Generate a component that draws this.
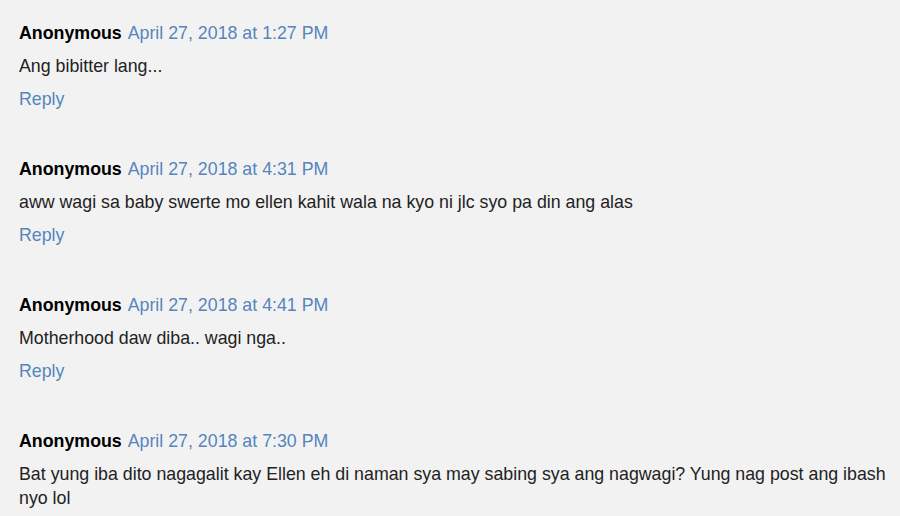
import React from 'react';

const comments = [
  { date: 'April 27, 2018 at 1:27 PM', body: 'Ang bibitter lang...' },
  {
    date: 'April 27, 2018 at 4:31 PM',
    body: 'aww wagi sa baby swerte mo ellen kahit wala na kyo ni jlc syo pa din ang alas',
  },
  { date: 'April 27, 2018 at 4:41 PM', body: 'Motherhood daw diba.. wagi nga..' },
  {
    date: 'April 27, 2018 at 7:30 PM',
    body: 'Bat yung iba dito nagagalit kay Ellen eh di naman sya may sabing sya ang nagwagi? Yung nag post ang ibash nyo lol',
    last: true,
  },
];

const Comment = ({ date, body, last }) => (
  <div className="mb-[46.3px]">
    <div className="leading-[24px]">
      <span className="font-bold text-[#000]">Anonymous</span>{' '}
      <a href="#" className="ml-[1px] text-[#5685bd]">{date}</a>
    </div>
    <p className="mt-[9px] leading-[24px] text-[#222]">{body}</p>
    {!last && (
      <a href="#" className="block mt-[9px] leading-[24px] text-[#5685bd]">
        Reply
      </a>
    )}
  </div>
);

const App = () => (
  <div
    className="w-[900px] h-[516px] overflow-hidden bg-[#f2f2f2] pl-[19px] pr-[4px] pt-[20.5px] text-[17.8px]"
    style={{ fontFamily: '"Liberation Sans", Arial, sans-serif' }}
  >
    {comments.map((c) => (
      <Comment key={c.date} {...c} />
    ))}
  </div>
);

export default App;
